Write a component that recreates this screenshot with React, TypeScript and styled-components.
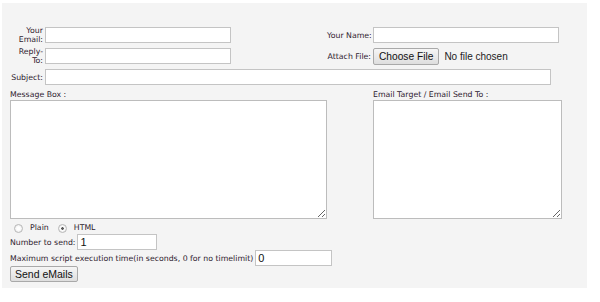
import React from 'react';
import styled, { createGlobalStyle } from 'styled-components';

const GlobalStyle = createGlobalStyle`
  body {
    margin: 0;
    background: #ffffff;
    font-family: "DejaVu Sans", Verdana, sans-serif;
  }
`;

const Panel = styled.form`
  margin: 3px 0 0 2px;
  width: 585px;
  height: 285px;
  box-sizing: border-box;
  padding-top: 24px;
  background: #f4f4f4;
`;

const TopGrid = styled.div`
  display: grid;
  grid-template-columns: 41px 186px 92px 44px 186px;
  grid-auto-rows: 16px;
  column-gap: 2px;
  row-gap: 5px;
  align-items: center;
`;

const Label = styled.label<{ $col?: number }>`
  grid-column: ${(p) => p.$col ?? 1};
  font-size: 7.8px;
  line-height: 9px;
  color: #2e1a2e;
  text-align: right;
  white-space: nowrap;
`;

const TextInput = styled.input<{ $col?: number; $w?: number }>`
  grid-column: ${(p) => p.$col ?? 2};
  width: ${(p) => (p.$w ? `${p.$w}px` : '100%')};
  height: 16px;
  box-sizing: border-box;
  margin: 0;
  padding: 0 2px;
  border: 1px solid #c4c4c4;
  background: #ffffff;
  font-family: "Liberation Sans", Arial, sans-serif;
  font-size: 11px;
  color: #111;
  outline: none;
`;

const SubjectInput = styled(TextInput)`
  grid-column: 2 / 6;
`;

const FileField = styled.div`
  grid-column: 5;
  display: flex;
  align-items: center;
  gap: 5px;
  font-family: "Liberation Sans", Arial, sans-serif;
  font-size: 10px;
  color: #222;
  white-space: nowrap;
`;

const Button = styled.button`
  height: 17px;
  box-sizing: border-box;
  margin: 0;
  padding: 0 5px;
  border: 1px solid #a9a9a9;
  border-radius: 2px;
  background: linear-gradient(#f6f6f6, #dedede);
  font-family: "Liberation Sans", Arial, sans-serif;
  font-size: 10.2px;
  color: #111;
`;

const MessageGrid = styled.div`
  display: grid;
  grid-template-columns: 317px 189px;
  column-gap: 46px;
  padding-left: 8px;
  margin-top: 5px;
`;

const AreaLabel = styled.div`
  font-size: 7.8px;
  line-height: 10px;
  height: 10px;
  color: #2e1a2e;
`;

const Area = styled.textarea`
  display: block;
  width: 100%;
  height: 119px;
  box-sizing: border-box;
  margin: 0;
  border: 1px solid #bcbcbc;
  background: #ffffff;
`;

const Bottom = styled.div`
  display: flex;
  flex-direction: column;
  align-items: flex-start;
  padding-left: 8px;
  margin-top: 4px;
`;

const RadioRow = styled.div`
  display: flex;
  align-items: center;
  height: 10px;
  padding-left: 4px;
`;

const Radio = styled.input`
  appearance: none;
  width: 9px;
  height: 9px;
  margin: 0;
  border: 1px solid #b8b8b8;
  border-radius: 50%;
  box-sizing: border-box;
  background: radial-gradient(circle, #ffffff 30%, #e2e2e2 100%);

  &:checked {
    background: radial-gradient(circle, #5a5a5a 0 22%, #ffffff 32%, #e2e2e2 100%);
  }
`;

const RadioText = styled.span<{ $gap: number }>`
  margin: 0 ${(p) => p.$gap}px 0 7px;
  font-size: 7.8px;
  line-height: 10px;
  color: #2e1a2e;
`;

const FieldRow = styled.div<{ $top?: number }>`
  display: flex;
  align-items: center;
  gap: 2px;
  height: 16px;
  margin-top: ${(p) => p.$top ?? 0}px;
`;

const InlineLabel = styled.span`
  font-size: 7.8px;
  color: #2e1a2e;
  white-space: nowrap;
`;

const SendButton = styled(Button)`
  height: 16px;
  padding: 0 4px;
  font-size: 10.5px;
`;

export default function App() {
  return (
    <>
      <GlobalStyle />
      <Panel onSubmit={(e) => e.preventDefault()}>
        <TopGrid>
          <Label>
            Your
            <br />
            Email:
          </Label>
          <TextInput type="text" />
          <Label $col={4}>Your Name:</Label>
          <TextInput type="text" $col={5} />

          <Label>
            Reply-
            <br />
            To:
          </Label>
          <TextInput type="text" />
          <Label $col={4}>Attach File:</Label>
          <FileField>
            <Button type="button">Choose File</Button>
            <span>No file chosen</span>
          </FileField>

          <Label>Subject:</Label>
          <SubjectInput type="text" $w={506} />
        </TopGrid>

        <MessageGrid>
          <AreaLabel>Message Box :</AreaLabel>
          <AreaLabel>Email Target / Email Send To :</AreaLabel>
          <Area />
          <Area />
        </MessageGrid>

        <Bottom>
          <RadioRow>
            <Radio type="radio" name="type" value="plain" />
            <RadioText $gap={9}>Plain</RadioText>
            <Radio type="radio" name="type" value="html" defaultChecked />
            <RadioText $gap={0}>HTML</RadioText>
          </RadioRow>
          <FieldRow $top={1}>
            <InlineLabel>Number to send:</InlineLabel>
            <TextInput type="text" defaultValue="1" $w={80} />
          </FieldRow>
          <FieldRow>
            <InlineLabel>Maximum script execution time(in seconds, 0 for no timelimit)</InlineLabel>
            <TextInput type="text" defaultValue="0" $w={77} />
          </FieldRow>
          <SendButton type="submit">Send eMails</SendButton>
        </Bottom>
      </Panel>
    </>
  );
}
